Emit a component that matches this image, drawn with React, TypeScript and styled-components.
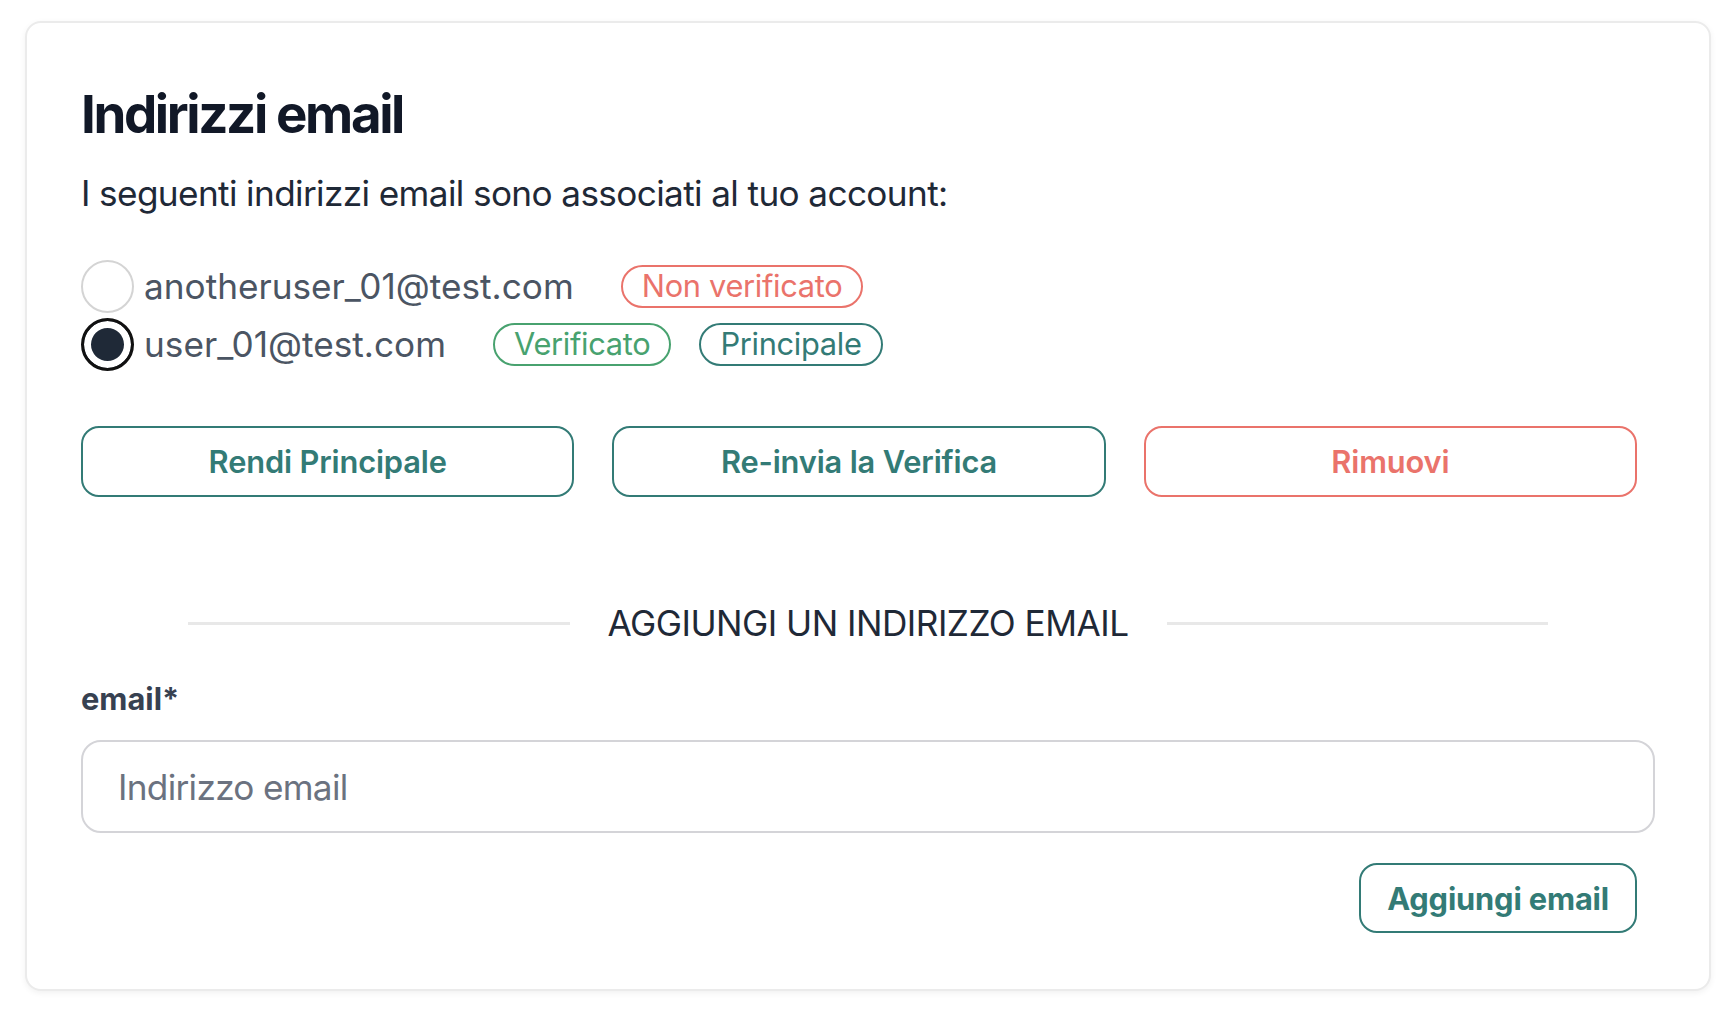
import React from "react";
import styled, { createGlobalStyle, css } from "styled-components";

const GlobalStyle = createGlobalStyle`
  html, body {
    margin: 0;
    padding: 0;
    background: #ffffff;
  }
  body {
    font-family: Inter, "Noto Sans", "Liberation Sans", sans-serif;
    color: #1f2937;
    -webkit-font-smoothing: antialiased;
  }
  * { box-sizing: border-box; }
`;

const Page = styled.div`
  padding: 21px 21px 33px 25px;
`;

const Card = styled.section`
  border: 2px solid #ebebeb;
  border-radius: 16px;
  background: #ffffff;
  box-shadow: 0 2px 6px rgba(0, 0, 0, 0.06);
  padding: 60px 54px 56px 54px;
  display: flex;
  flex-direction: column;
`;

const Title = styled.h2`
  margin: 0;
  font-size: 52.8px;
  line-height: 1.2;
  font-weight: 700;
  letter-spacing: -0.045em;
  color: #111827;
`;

const Lead = styled.p`
  margin: 21px 0 0;
  font-size: 35.2px;
  line-height: 1.5;
  letter-spacing: -0.018em;
  color: #1f2937;
`;

const EmailList = styled.div`
  margin-top: 40px;
  display: flex;
  flex-direction: column;
  gap: 5px;
`;

const EmailRow = styled.label`
  display: flex;
  align-items: center;
  height: 53px;
`;

const Radio = styled.input.attrs({ type: "radio" })`
  appearance: none;
  -webkit-appearance: none;
  margin: 0;
  width: 53px;
  height: 53px;
  flex: none;
  border-radius: 50%;
  border: 2px solid #d4d4d4;
  background: #ffffff;

  &:checked {
    border: 3px solid #111111;
    background: #1f2937;
    box-shadow: inset 0 0 0 7px #ffffff;
  }
`;

const Address = styled.span`
  margin-left: 10px;
  font-size: 35.2px;
  line-height: 1;
  color: #4b5563;
`;

type Tone = "danger" | "success" | "primary";

const toneColors: Record<Tone, string> = {
  danger: "#ea736b",
  success: "#48a26f",
  primary: "#337b76",
};

const Badge = styled.span<{ $tone: Tone; $first?: boolean }>`
  margin-left: ${(p) => (p.$first ? "47px" : "28px")};
  height: 43px;
  padding: 0 19px;
  display: inline-flex;
  align-items: center;
  border-radius: 999px;
  border: 2px solid ${(p) => toneColors[p.$tone]};
  color: ${(p) => toneColors[p.$tone]};
  font-size: 30.8px;
  line-height: 1;
  letter-spacing: -0.01em;
`;

const ActionGrid = styled.div`
  margin-top: 55px;
  padding-right: 18px;
  display: grid;
  grid-template-columns: repeat(3, 1fr);
  gap: 38px;
`;

const outlineButton = css<{ $tone: Tone }>`
  border: 2px solid ${(p) => toneColors[p.$tone]};
  color: ${(p) => toneColors[p.$tone]};
  background: #ffffff;
  font-family: Inter, "Noto Sans", "Liberation Sans", sans-serif;
  font-weight: 600;
  font-size: 30.8px;
  letter-spacing: -0.005em;
  cursor: pointer;
`;

const ActionButton = styled.button<{ $tone: Tone }>`
  ${outlineButton};
  height: 71px;
  border-radius: 18px;
`;

const Divider = styled.div`
  margin-top: 100px;
  padding: 0 107px;
  display: flex;
  align-items: center;
  gap: 38px;
`;

const Rule = styled.span`
  flex: 1;
  height: 3px;
  background: #e8e8e8;
`;

const DividerText = styled.span`
  font-size: 35.2px;
  line-height: 1.5;
  color: #1f2937;
  text-transform: uppercase;
  letter-spacing: -0.015em;
`;

const FieldLabel = styled.label`
  margin-top: 26px;
  font-size: 30.8px;
  line-height: 1.5;
  font-weight: 700;
  color: #374151;
`;

const EmailInput = styled.input`
  margin-top: 18px;
  height: 93px;
  width: 100%;
  border: 2px solid #d4d4d8;
  border-radius: 20px;
  padding: 0 35px;
  font-family: Inter, "Noto Sans", "Liberation Sans", sans-serif;
  font-size: 35.2px;
  letter-spacing: -0.02em;
  color: #111827;
  outline: none;

  &::placeholder {
    color: #6b7280;
  }
`;

const FormActions = styled.div`
  margin-top: 30px;
  padding-right: 18px;
  display: flex;
  justify-content: flex-end;
`;

const SubmitButton = styled.button<{ $tone: Tone }>`
  ${outlineButton};
  height: 70px;
  padding: 0 26px;
  border-radius: 18px;
  font-weight: 700;
`;

export default function App() {
  return (
    <Page>
      <GlobalStyle />
      <Card>
        <Title>Indirizzi email</Title>
        <Lead>I seguenti indirizzi email sono associati al tuo account:</Lead>
        <EmailList>
          <EmailRow>
            <Radio name="email" value="anotheruser_01@test.com" />
            <Address>anotheruser_01@test.com</Address>
            <Badge $tone="danger" $first>
              Non verificato
            </Badge>
          </EmailRow>
          <EmailRow>
            <Radio name="email" value="user_01@test.com" defaultChecked />
            <Address>user_01@test.com</Address>
            <Badge $tone="success" $first>
              Verificato
            </Badge>
            <Badge $tone="primary">Principale</Badge>
          </EmailRow>
        </EmailList>
        <ActionGrid>
          <ActionButton $tone="primary">Rendi Principale</ActionButton>
          <ActionButton $tone="primary">Re-invia la Verifica</ActionButton>
          <ActionButton $tone="danger">Rimuovi</ActionButton>
        </ActionGrid>
        <Divider>
          <Rule />
          <DividerText>Aggiungi un indirizzo email</DividerText>
          <Rule />
        </Divider>
        <FieldLabel htmlFor="email">email*</FieldLabel>
        <EmailInput id="email" type="email" placeholder="Indirizzo email" />
        <FormActions>
          <SubmitButton $tone="primary">Aggiungi email</SubmitButton>
        </FormActions>
      </Card>
    </Page>
  );
}
